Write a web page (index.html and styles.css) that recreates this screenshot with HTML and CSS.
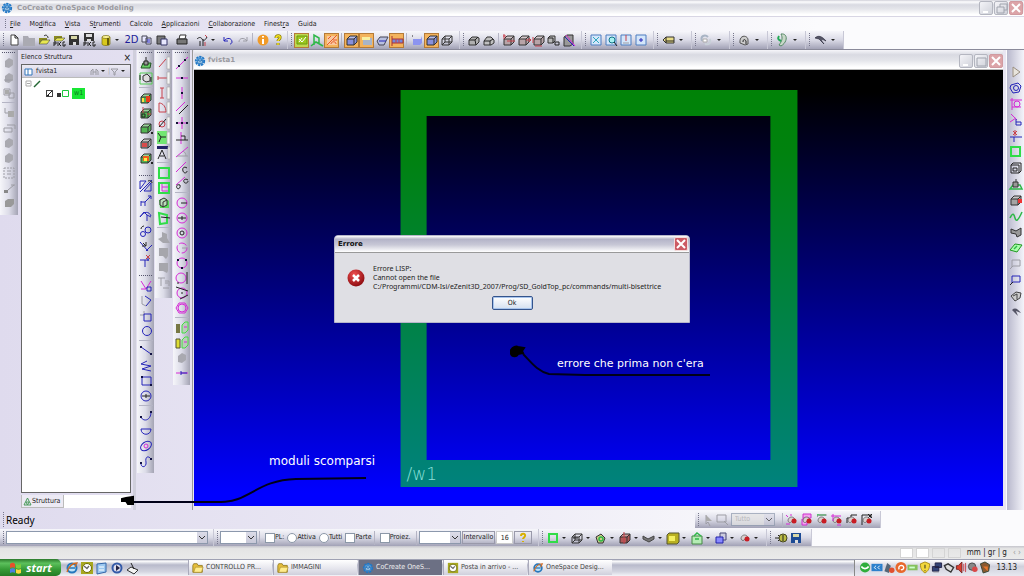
FILE: index.html
```html
<!DOCTYPE html>
<html lang="it">
<head>
<meta charset="utf-8">
<title>CoCreate OneSpace Modeling</title>
<link rel="stylesheet" href="styles.css">
</head>
<body>
<svg class="defs" aria-hidden="true">
  <symbol id="box" viewBox="0 0 14 14"><path d="M2 6h7v6H2z" fill="currentColor"/><path d="M2 6l3-3h7L9 6z" fill="currentColor"/><path d="M2 6l3-3h7L9 6z" fill="#fff" fill-opacity=".4"/><path d="M9 6l3-3v6l-3 3z" fill="currentColor"/><path d="M2 6h7v6H2zL5 3h7L9 6M12 3v6l-3 3" fill="none" stroke="#333"/></symbol>
  <symbol id="wire" viewBox="0 0 14 14"><path d="M2 6h7v6H2zL5 3h7L9 6M12 3v6l-3 3M5 3v6h7M5 9l-3 3" fill="none" stroke="currentColor"/></symbol>
  <symbol id="logo" viewBox="0 0 14 14"><circle cx="7" cy="7" r="4.500" fill="none" stroke="#2277c4" stroke-width="3" stroke-dasharray="2.500 .8"/><circle cx="7" cy="7" r="4" fill="#4a9ade"/><path d="M4.500 6l2.500-1.500L9.500 6v3L7 10.500 4.500 9zM4.500 6L7 7.500 9.500 6M7 7.500v3" fill="#bfe2fa" stroke="#185a9c" stroke-width=".7"/></symbol>
  <symbol id="blob" viewBox="0 0 14 14"><path d="M3 5l4-3 4 2v5l-4 3-4-1z" fill="#a9a9b0"/></symbol>
  <symbol id="disk" viewBox="0 0 14 14"><path d="M2 2h10v10H2z" fill="currentColor"/><path d="M4 3h6v3H4z" fill="#d8d8a8"/><path d="M6 9h3v3H6z" fill="#ddd"/></symbol>
  <symbol id="folder" viewBox="0 0 14 14"><path d="M1 4l1-2h4l1 2h5v8H1z" fill="#e6bf3c" stroke="#937a20"/><path d="M2 12l2-6h9l-2 6z" fill="#ffec8c" stroke="#a58a2c" stroke-width=".7"/></symbol>
  <symbol id="clock" viewBox="0 0 14 14"><path d="M1 1h12v12H1z" fill="#a8a820"/><circle cx="7" cy="7" r="4.500" fill="#fff" stroke="#6d6d00"/><path d="M4 5l3 2.500L9 5" fill="none" stroke="#666" stroke-width="1.300"/></symbol>
  <symbol id="ie" viewBox="0 0 14 14"><circle cx="7" cy="7" r="4.500" fill="#bfe3f8" stroke="#2577bd" stroke-width="2"/><path d="M4 7h6" stroke="#2577bd" stroke-width="1.500"/><path d="M2 11C4 5 8 2 12 2l-2 4" fill="none" stroke="#d06b24" stroke-width="1.300"/></symbol>
  <symbol id="dot2" viewBox="0 0 14 14"><path d="M3 8c0-4 4-5 6-3l2 3-2 2-2-2c-1 2-3 2-4 0z" fill="#d8d0d0" stroke="#555" stroke-width=".7"/><circle cx="9" cy="8" r="2.500" fill="#c81c24"/></symbol>
</svg>

<header class="titlebar">
  <svg class="ico"><use href="#logo"/></svg>
  <h1>CoCreate OneSpace Modeling</h1>
  <div class="winbtns">
    <button class="wb" aria-label="Riduci"><svg><path d="M3 10h5" class="w2"/></svg></button>
    <button class="wb" aria-label="Ripristina"><svg><path d="M5 5V2h7v6h-3M2 5h7v6H2z" class="w1"/></svg></button>
    <button class="wb close" aria-label="Chiudi"><svg><path d="M2 2l8 8M10 2l-8 8" class="wx"/></svg></button>
  </div>
</header>

<nav class="menu">
  <i class="grip"></i>
  <a href="#"><u>F</u>ile</a><a href="#">Mo<u>d</u>ifica</a><a href="#"><u>V</u>ista</a><a href="#">S<u>t</u>rumenti</a><a href="#">Calcolo</a><a href="#"><u>A</u>pplicazioni</a><a href="#"><u>C</u>ollaborazione</a><a href="#">Finest<u>r</u>a</a><a href="#">Guida</a>
</nav>

<div class="tools">
  <div class="bar">
    <i class="grip"></i>
    <button class="t" aria-label="Nuovo"><svg><path d="M4 2h4l3 3v7H4z" fill="#fff" stroke="#444"/><path d="M8 2v3h3" class="k"/></svg></button>
    <button class="t" aria-label="Cartella"><svg><path d="M1 3h5l1 2h6v8H1z" fill="#aaaab2"/></svg></button>
    <button class="t" aria-label="Apri"><svg><path d="M2 5h8v6H2z" fill="#8a8a20"/><path d="M2 11l3-4h8l-3 4z" fill="#e8e850" stroke="#444" stroke-width=".6"/><path d="M7 3c2-2 4 0 4 2" class="k"/></svg></button>
    <button class="t" aria-label="Apri pacchetto"><svg><path d="M2 3h8v5H2z" fill="#8a8a20"/><path d="M2 8l3-3h8l-3 3z" fill="#e8e850" stroke="#444" stroke-width=".6"/><path d="M2 13V9h2v2H2M6 9v4M9 9l-2 2 2 2M13 9h-2v4h2v-2" class="k"/></svg></button>
    <button class="t" aria-label="Salva"><svg class="c-dk"><use href="#disk"/></svg></button>
    <button class="t" aria-label="Salva pacchetto"><svg class="c-dk"><path d="M2 0h10v8H2z" fill="#333"/><path d="M4 1h6v3H4zM5 6h4v2H5z" fill="#ddd"/><path d="M2 13V9h2v2H2M6 9v4M9 9l-2 2 2 2M13 9h-2v4h2v-2" class="k"/></svg></button>
    <i class="gap2"></i>
    <button class="t" aria-label="Database"><svg><path d="M3 4v7c0 2 8 2 8 0V4z" fill="#d8c81c" stroke="#776c10" stroke-width=".7"/><ellipse cx="7" cy="4" rx="4" ry="1.500" fill="#fff79a" stroke="#776c10" stroke-width=".7"/><path d="M9 5v7" stroke="#665c08" stroke-width="2"/></svg></button><i class="dd"></i>
    <button class="t txt2d" aria-label="2D">2D</button>
    <button class="t" aria-label="Copia"><svg><path d="M2 3h5v6H2zM6 5h5v6H6z" fill="#e8e8ff" stroke="#445"/><path d="M7 7h3M7 9h3" class="b"/></svg></button>
    <button class="t" aria-label="Incolla"><svg><path d="M2 3h8v8H2z" fill="#777" stroke="#333"/><path d="M6 6h6v6H6z" fill="#e8e8ff" stroke="#336"/></svg></button>
    <i class="gap5"></i>
    <button class="t" aria-label="Stampa"><svg><path d="M4 6l1-4h6l-1 4z" fill="#fff" stroke="#333"/><path d="M2 6h10v5H2z" fill="#777" stroke="#222"/></svg></button>
    <i class="gap5"></i>
    <button class="t" aria-label="Strumenti"><svg><path d="M2 6c2-2 4-2 5 0s3 2 5-2M8 6v7M5 8v5" class="k"/><path d="M10 2l2 2M10 9v4" class="r"/></svg></button><i class="dd"></i>
    <i class="gap2"></i>
    <button class="t" aria-label="Annulla"><svg><path d="M3 4v4h4M3 8c3-4 8-3 8 1 0 1-1 2-2 2" class="b"/></svg></button>
    <button class="t" aria-label="Ripeti"><svg><path d="M11 4v4H7M11 8C8 4 3 5 3 9" class="s"/></svg></button>
    <i class="sep"></i>
    <button class="t" aria-label="Informazioni"><svg><circle cx="7" cy="7" r="5.500" fill="#f09a28"/><path d="M7 3v1.500M7 6v5" stroke="#fff" stroke-width="2"/></svg></button>
    <button class="t" aria-label="Aiuto"><svg><path d="M5 5c0-3 5-3 4 0 0 1-2 2-2 3M7 10v2" fill="none" stroke="#8a7a00" stroke-width="3"/><path d="M5 5c0-3 5-3 4 0 0 1-2 2-2 3M7 10v2" fill="none" stroke="#f4e424" stroke-width="1.500"/></svg></button>
    <i class="gap2"></i>
  </div>
  <div class="bar">
    <i class="grip"></i>
    <button class="t on lime" aria-label="Piano di lavoro"><svg><path d="M2 3h10v8H2z" fill="#9cc820" stroke="#6a9a10"/><path d="M4 6l3 3 4-5M4 9l3-4" stroke="#fff" fill="none"/></svg></button>
    <button class="t" aria-label="Assi"><svg><path d="M4 12V2l5 3v5M1 13l5-4 7 4M4 9l5 1" class="g"/></svg></button>
    <button class="t on" aria-label="Schizzo"><svg><path d="M2 3h10v9H2z" fill="#f8c8a0"/><path d="M2 12L12 2M3 6l3-3M6 11c0-3 5-3 5 0M8 7h4" stroke="#e85a28" fill="none"/></svg></button>
    <i class="sep"></i>
    <button class="t on" aria-label="Ombreggiato"><svg class="c-bl"><use href="#box"/></svg></button>
    <button class="t on" aria-label="Misto"><svg><path d="M3 5h9v7H3z" fill="#a8b4c8"/><path d="M2 4h8v3H2z" fill="#f8f0a0"/></svg></button>
    <button class="t" aria-label="Faccia"><svg class="c-bl"><path d="M2 8l3-4h8l-2 4-2 4H4z" fill="#b8c0e0" stroke="#445"/><path d="M4 8h7" class="b"/></svg></button>
    <button class="t on" aria-label="Sezione"><svg><path d="M2 3v10M2 6h11v4H2" fill="#7488d8" stroke="#a33"/><path d="M6 6v4M9 6v4" class="r"/></svg></button>
    <i class="sep"></i>
    <button class="t" aria-label="Solido"><svg><path d="M3 6l8 0 1-3v7l-2 2H3z" fill="#8c94f0"/><path d="M2 3h1" class="k"/></svg></button>
    <button class="t on" aria-label="Bordi"><svg class="c-bl"><use href="#box"/></svg></button>
    <button class="t" aria-label="Filo"><svg class="c-dk"><use href="#wire"/></svg></button>
    <i class="gap5"></i>
  </div>
  <div class="bar">
    <i class="grip"></i>
    <button class="t" aria-label="Raccordo"><svg><path d="M2 7l3-3h5l2 1v4l-3 3H2z" fill="#b0b0b0" stroke="#333"/><path d="M2 7h6l1 5M8 7l3-3" class="k"/></svg></button>
    <button class="t" aria-label="Smusso"><svg><path d="M2 8l3-4h4l3 3v3l-3 2H2z" fill="#c0c0c0" stroke="#333"/><path d="M2 8h6v4M8 8l3-2" class="k"/></svg></button>
    <i class="sep"></i>
    <button class="t" aria-label="Estrudi"><svg class="c-pk"><use href="#box"/><path d="M2 1v5M1 3h3M5 8h8" class="r"/></svg></button>
    <button class="t" aria-label="Tira"><svg class="c-pk"><use href="#box"/><path d="M9 7h4M12 5l2 2-2 2" class="r"/></svg></button>
    <button class="t" aria-label="Sposta"><svg class="c-pk"><use href="#box"/><path d="M1 4v6M3 13h7" class="r"/></svg></button>
    <button class="t" aria-label="Scala"><svg class="c-gy"><path d="M1 5l2-2h5v5l-2 2H1z" fill="#bbb" stroke="#333"/><path d="M1 5h5v5M8 9h4v3H8z" class="k"/></svg></button>
    <button class="t" aria-label="Taglia"><svg><path d="M2 4l3-2h6v9l-3 2H2z" fill="#999" stroke="#333"/><path d="M4 2l9 11" class="m"/><path d="M3 4l9 9" class="b"/></svg></button>
    <i class="gap5"></i>
  </div>
  <div class="bar">
    <i class="grip"></i>
    <button class="t" aria-label="Adatta"><svg><path d="M2 2h10v10H2z" class="zf"/><path d="M4 4l6 6M10 4l-6 6" stroke="#30a8c0"/></svg></button>
    <button class="t" aria-label="Zoom finestra"><svg><path d="M2 2h10v10H2z" class="zf"/><circle cx="8" cy="7" r="3" fill="#a8f0f0" stroke="#178"/><path d="M10 9l3 4" class="k"/></svg></button>
    <button class="t" aria-label="Zoom precedente"><svg><path d="M2 2h10v10H2z" class="zf"/><path d="M7 2v6" class="r"/><path d="M4 10h6" class="s"/></svg></button>
    <button class="t" aria-label="Centra"><svg><path d="M2 2h10v10H2z" class="zf"/><path d="M7 5v4M5 7h4" class="b"/></svg></button>
    <i class="gap5"></i>
  </div>
  <div class="bar"><i class="grip"></i><button class="t w" aria-label="Etichetta"><svg><path d="M2 7l3-3h8v6H5z" fill="#e8dc88" stroke="#333"/><path d="M5 4v6M5 8h8" class="k"/></svg></button><i class="dd"></i><i class="gap5"></i></div>
  <div class="bar"><i class="grip"></i><button class="t w" aria-label="Ruota"><svg><path d="M3 8c-2-5 3-7 6-4" fill="none" stroke="#a8b4c4" stroke-width="2"/><path d="M4 6h4v3H4z" fill="#fff" stroke="#aaa"/><path d="M11 6c1 5-2 6-5 5" fill="none" stroke="#c8d0d8" stroke-width="2"/></svg></button><i class="dd"></i><i class="gap5"></i></div>
  <div class="bar"><i class="grip"></i><button class="t w" aria-label="Blocca"><svg><path d="M3 10c-1-9 8-8 8-3v4l-3 1-5-2z" fill="#ccc" stroke="#555"/><path d="M6 9c0-3 2-3 3-1v3" class="k"/></svg></button><i class="dd"></i><i class="gap5"></i></div>
  <div class="bar"><i class="grip"></i><button class="t w" aria-label="Analisi"><svg><path d="M6 1c7-1 7 8 0 12l-2-1c3-4 4-7 2-11z" fill="#c8d8c8" stroke="#586"/><path d="M4 3c-2 3 0 4 2 5" fill="none" stroke="#2a5" stroke-width="2"/></svg></button><i class="dd"></i><i class="gap5"></i></div>
  <div class="bar"><i class="grip"></i><button class="t w" aria-label="Utensili"><svg><path d="M2 5c3-3 7-2 11 3-2-1-4-2-5-1l3 4-5-5z" fill="#556" stroke="#223" stroke-width=".6"/></svg></button><i class="dd"></i><i class="gap5"></i></div>
</div>

<main class="work">
  <div class="strip off">
    <i class="grip h"></i>
    <button class="t" aria-label="Parte"><svg><use href="#blob"/></svg></button>
    <button class="t" aria-label="Assieme"><svg><use href="#blob"/><path d="M2 9h9" class="s"/></svg></button>
    <button class="t" aria-label="Copia"><svg><path d="M2 3h6v6H2zM7 7h5v5H7z" class="s"/><path d="M3 4h4v4H3z" fill="#aaa"/></svg></button>
    <i class="sep h"></i>
    <button class="t" aria-label="Inserisci"><svg><path d="M3 2v5h3" class="s"/><path d="M6 5h6v6H6z" fill="#aaa"/></svg></button>
    <button class="t" aria-label="Rimuovi"><svg><path d="M2 7h8v4H2zM5 4h8v4" class="s"/></svg></button>
    <button class="t" aria-label="Condividi"><svg><use href="#blob"/></svg></button>
    <button class="t" aria-label="Carica"><svg><use href="#blob"/></svg></button>
    <button class="t" aria-label="Griglia"><svg><path d="M2 2h10v10H2z" class="s" stroke-dasharray="2 1"/><path d="M5 5h4M5 8h4" class="s"/></svg></button>
    <button class="t" aria-label="Collega"><svg><path d="M2 9h4v3H2z" fill="#888"/><path d="M6 9l6-5" class="s"/><path d="M9 4h4" class="s"/></svg></button>
    <button class="t" aria-label="Blocco"><svg><path d="M3 5l3-2h6v5l-3 3H3z" fill="#999"/></svg></button>
    <i class="gap5"></i>
  </div>

  <aside class="panel">
    <div class="ptitle"><h2>Elenco Struttura</h2><button class="px" aria-label="Chiudi pannello">×</button></div>
    <div class="tree">
      <div class="thead"><svg class="mini"><path d="M1 2h7v6H1zM4 2v6" fill="#fff" stroke="#37b"/></svg><span>fvista1</span><span class="filt"><svg class="mini"><path d="M1 8V4l2-2v6M6 8V2l2 2v4M3 5h3" class="s"/></svg><i class="dd"></i>|<svg class="mini"><path d="M1 2h7L5 5v3H4V5z" class="s"/></svg><i class="dd"></i></span></div>
      <div class="node"><svg class="mini"><path d="M2 2h5v5H2zM3 4.500h3" fill="none" stroke="#aaa"/></svg><svg class="mini"><path d="M1 8l6-6" stroke="#263" fill="none" stroke-width="1.500"/></svg></div>
      <div class="node kid"><input type="checkbox" checked id="w1"><svg class="pair"><path d="M1 5h4v4H1z" fill="#333"/><path d="M6.500 2.500h6v6h-6z" fill="#fff" stroke="#1bc83c"/></svg><label for="w1">w1</label></div>
    </div>
    <div class="tabs"><button class="tab"><svg class="mini"><path d="M4.500 1L8 8H1zM3 5h3l-1.500 3z" fill="none" stroke="#4a9a5c"/></svg>Struttura</button></div>
  </aside>

  <div class="strip s2">
    <i class="grip h"></i>
    <button class="t" aria-label="Estrusione"><svg><path d="M2 12l2-5h8l-1 5z" fill="#6c6" stroke="#252"/><path d="M5 5h4v4H5zM7 5V1" fill="#999" stroke="#222"/></svg></button>
    <button class="t" aria-label="Rotazione"><svg><path d="M1 2h12v11H1z" fill="none" stroke="#5c5"/><path d="M4 5l4-2 3 3v4l-4 1-3-2z" fill="#ddd" stroke="#333"/><path d="M1 4v5M12 6v5" class="k"/></svg></button>
    <i class="sep h"></i>
    <button class="t" aria-label="Unisci"><svg class="c-gr"><use href="#box"/><path d="M7 5h4v6H7z" fill="#e83c1c"/><path d="M3 7h2v4H3z" fill="#fd4"/></svg></button>
    <button class="t" aria-label="Sottrai"><svg class="c-gr"><use href="#box"/><path d="M4 1v6M8 8h4" class="r"/><path d="M3 8h3v3H3z" class="k"/></svg></button>
    <button class="t" aria-label="Intersezione"><svg class="c-gr"><use href="#box"/><path d="M12 11h2v2h-2z" fill="#222"/></svg></button>
    <button class="t" aria-label="Foro"><svg class="c-gy"><use href="#box"/><path d="M3 7h5v4H3z" fill="#d84c4c"/></svg></button>
    <button class="t" aria-label="Svuota"><svg class="c-gr"><use href="#box"/><path d="M4 5h6v5H4z" fill="#f05c1c"/><path d="M5 7h3v3H5z" fill="#fe4"/><path d="M12 11h2v2h-2z" fill="#222"/></svg></button>
    <i class="gap8"></i><i class="grip h"></i>
    <button class="t" aria-label="Specchio"><svg><path d="M1 2h6L1 10zM12 4v8H5zM1 13L13 1" class="b"/><path d="M9 2c2-1 4 0 4 2" class="k"/></svg></button>
    <button class="t" aria-label="Trasla"><svg><path d="M2 7v5M2 8h4v4M6 8l6-6M9 2h3v3" class="b"/></svg></button>
    <button class="t" aria-label="Ruota profilo"><svg><path d="M1 8l4-5 3 3 4 2M8 6v6M1 8c4-6 9-6 11-1" class="b"/></svg></button>
    <button class="t" aria-label="Copia cerchi"><svg><circle cx="4" cy="10" r="2.500" class="b"/><circle cx="9" cy="6" r="3" class="b"/><path d="M2 5c0-2 2-3 3-3" class="k"/></svg></button>
    <button class="t" aria-label="Equidistante"><svg><path d="M1 3l8 9M7 12l6-6" class="b"/><path d="M3 7h4V3M7 7L4 4" class="k"/></svg></button>
    <button class="t" aria-label="Taglia linea"><svg><path d="M1 6h9M6 6v7M9 3v4" class="b"/><path d="M7 1l4 4M11 1L7 5" class="r"/></svg></button>
    <i class="gap5"></i><i class="grip h"></i>
    <button class="t" aria-label="Raccorda"><svg><path d="M2 2l5 8 5-8M2 10h5" class="m"/><path d="M8 12V8h4v4z" class="b"/></svg></button>
    <button class="t" aria-label="Smussa"><svg><path d="M6 2l6 4-5 6" class="b"/><path d="M3 2v8l4 2" class="s"/></svg></button>
    <button class="t" aria-label="Angolo"><svg><path d="M1 6h4V2" class="s"/><path d="M5 5h7v7H5z" class="b"/></svg></button>
    <button class="t" aria-label="Tondo"><svg><circle cx="8" cy="7" r="4.500" class="b"/></svg></button>
    <i class="sep h"></i>
    <button class="t" aria-label="Linea"><svg><path d="M2 3l10 7" class="b"/><path d="M1 2h2v2H1zM11 9h2v2h-2z" fill="#114"/></svg></button>
    <button class="t" aria-label="Polilinea"><svg><path d="M8 2L2 5l10 2-9 3 9 2" class="b"/></svg></button>
    <button class="t" aria-label="Rettangolo"><svg><path d="M3 3h9v8H3z" class="b"/><path d="M2 2h2v2H2zM11 10h2v2h-2z" fill="#114"/></svg></button>
    <button class="t" aria-label="Cerchio"><svg><circle cx="7" cy="7" r="5" class="b"/><path d="M3 7h8M7 5v4" class="k"/></svg></button>
    <i class="sep h"></i>
    <button class="t" aria-label="Arco"><svg><path d="M2 8c2 5 10 4 10-5" class="b"/><path d="M1 7h2v2H1zM11 2h2v2h-2z" fill="#114"/></svg></button>
    <button class="t" aria-label="Semicerchio"><svg><path d="M2 5h10c0 7-10 7-10 0z" class="b"/></svg></button>
    <button class="t" aria-label="Ellisse"><svg><ellipse cx="7" cy="7" rx="6" ry="4" transform="rotate(-35 7 7)" class="b"/><circle cx="7" cy="7" r="2" class="m"/></svg></button>
    <button class="t" aria-label="Spline"><svg><path d="M2 9c0 6 6 4 5-1S9 1 12 5" class="b"/><path d="M1 8h2v2H1zM11 4h2v2h-2z" fill="#114"/></svg></button>
    <i class="gap5"></i>
  </div>

  <div class="strip s3">
    <i class="grip h"></i>
    <button class="t" aria-label="Quota linea"><svg><path d="M2 11l7-8" class="r"/><path d="M10 1h3v12h-3z" class="rl"/></svg></button>
    <button class="t" aria-label="Quota orizzontale"><svg><path d="M1 7h9M1 5v4" class="r"/><path d="M10 1h3v12h-3z" class="rl"/></svg></button>
    <button class="t" aria-label="Quota verticale"><svg><path d="M5 2v10M3 2h4M3 12h4" class="r"/><path d="M10 1h3v12h-3z" class="rl"/></svg></button>
    <button class="t" aria-label="Quota raggio"><svg><path d="M2 2v9h7c0-5-3-9-7-9z" class="r"/><path d="M10 1h3v12h-3z" class="rl"/></svg></button>
    <button class="t" aria-label="Quota diametro"><svg><circle cx="5" cy="8" r="3" class="r"/><path d="M2 11l7-8" class="k"/><path d="M10 1h3v12h-3z" class="rl"/></svg></button>
    <button class="t" aria-label="Quota attiva"><svg><path d="M0 0h10v13H0z" fill="#72e672"/><path d="M1 2l3 4 5 0M4 6l-2 5" class="k"/><path d="M10 1h3v12h-3z" class="rl"/></svg></button>
    <button class="t" aria-label="Testo"><svg><path d="M0 0h11v3H0z" fill="#226"/><path d="M1 13l4-9 4 9M3 10h4" class="k"/><path d="M11 1h2v12h-2z" class="rl"/></svg></button>
    <i class="sep h"></i>
    <button class="t" aria-label="Piano"><svg><path d="M2 2h10v10H2z" class="g2"/></svg></button>
    <button class="t" aria-label="Piano parallelo"><svg><path d="M2 2h10v10H2z" class="g2"/><path d="M5 3v7h6M5 6h6" class="m"/></svg></button>
    <button class="t" aria-label="Piano su faccia"><svg><path d="M2 4l6-2 4 3v7H3z" fill="#5d5"/><path d="M3 4l4-2 3 2v5l-4 2-3-2zM6 6v5M6 6l4-2" fill="#bdb" stroke="#333"/></svg></button>
    <button class="t" aria-label="Piano normale"><svg><path d="M2 2l8 2v8l-7 1z" class="g2"/><path d="M4 6l9 1" class="k"/></svg></button>
    <i class="sep h"></i>
    <button class="t" aria-label="Blocca"><svg><path d="M5 1l5 2v4l3 5H6l-5-4 4-2z" fill="#a6a6ac"/></svg></button>
    <button class="t" aria-label="Sblocca"><svg><path d="M2 2h9v8l-2 3-3-3H2z" fill="#a6a6ac"/></svg></button>
    <button class="t" aria-label="Proietta"><svg><path d="M2 2h9v8l-1 2-4-2H2z" fill="#a6a6ac"/></svg></button>
    <button class="t" aria-label="Testo 3D"><svg><path d="M1 2h7M4 2v8M8 5h4v5M8 7h3M6 12h6" class="s"/></svg></button>
    <i class="gap8"></i>
  </div>

  <div class="strip s4">
    <i class="grip h"></i>
    <button class="t" aria-label="Costruzione linea"><svg><path d="M1 13L13 1" class="m"/><path d="M3 9h2v2H3zM9 3h2v2H9z" fill="#113"/></svg></button>
    <button class="t" aria-label="Costruzione orizzontale"><svg><path d="M1 7h12" class="m"/><path d="M6 6h2v2H6z" fill="#113"/></svg></button>
    <button class="t" aria-label="Costruzione verticale"><svg><path d="M7 1v12" class="m"/><path d="M6 6h2v2H6z" fill="#113"/></svg></button>
    <button class="t" aria-label="Parallela"><svg><path d="M1 10L10 1" class="m"/><path d="M4 13l9-9" class="k"/></svg></button>
    <button class="t" aria-label="Asse"><svg><path d="M7 1v12M2 7h10" class="m"/><path d="M1 6h2v2H1zM11 6h2v2h-2zM6 6h2v2H6z" fill="#113"/></svg></button>
    <button class="t" aria-label="Perpendicolare"><svg><path d="M6 1v12" class="m"/><path d="M1 9h12M6 5h4v4" class="k"/></svg></button>
    <button class="t" aria-label="Bisettrice"><svg><path d="M1 11L13 1" class="m"/><path d="M2 10h11M8 5c2 1 3 3 3 5" class="s"/></svg></button>
    <button class="t" aria-label="Tangente"><svg><path d="M1 11L11 1" class="m"/><path d="M12 7c-3-2-5 0-4 3s4 2 4 0" class="k"/></svg></button>
    <button class="t" aria-label="Doppia tangente"><svg><path d="M1 9l9-8" class="m"/><path d="M13 4c-3-2-5 0-4 2s4 1 4-1M5 9c-3-1-4 1-3 3s4 0 3-3" class="k"/></svg></button>
    <i class="sep h"></i>
    <button class="t" aria-label="Cerchio centro"><svg><circle cx="7" cy="7" r="5" class="m"/><path d="M6 7h6" class="k"/></svg></button>
    <button class="t" aria-label="Cerchio diametro"><svg><circle cx="7" cy="7" r="5" class="m"/><path d="M7 5v4M3 7h8" class="k"/></svg></button>
    <button class="t" aria-label="Concentrico"><svg><circle cx="7" cy="7" r="5" class="m"/><circle cx="7" cy="7" r="2" class="k"/></svg></button>
    <button class="t" aria-label="Cerchio raggio"><svg><circle cx="7" cy="7" r="5" class="m" stroke-dasharray="8 2"/><path d="M7 7h5" class="s"/></svg></button>
    <button class="t" aria-label="Tre punti"><svg><circle cx="7" cy="7" r="5" class="m"/><path d="M2 3h2v2H2zM10 3h2v2h-2zM6 11h2v2H6z" fill="#113"/></svg></button>
    <button class="t" aria-label="Cerchio tangente"><svg><circle cx="6" cy="7" r="5" class="m"/><path d="M12 1v12M2 12h2" class="k"/></svg></button>
    <button class="t" aria-label="Tangente due"><svg><circle cx="7" cy="7" r="5" class="m"/><path d="M1 1l12 4M13 9L5 13M6 7h2" class="k"/></svg></button>
    <button class="t" aria-label="Poligono"><svg><path d="M4 2h6l3 5-3 5H4L1 7z" class="m"/><circle cx="7" cy="7" r="4" class="m"/></svg></button>
    <i class="sep h"></i>
    <button class="t" aria-label="Proietta bordo"><svg><path d="M1 3h4v9H1z" fill="#774"/><path d="M7 4l3-3h3v8l-3 3H7z" fill="#bcb" stroke="#4d4"/><path d="M9 6h3" class="m"/></svg></button>
    <button class="t" aria-label="Proietta faccia"><svg><path d="M1 3h4v9H1z" fill="#dd3" stroke="#553"/><path d="M7 4l3-3h3v8l-3 3H7z" fill="#bcb" stroke="#4d4"/><path d="M9 6h3" class="m"/></svg></button>
    <button class="t" aria-label="Elimina"><svg><use href="#blob"/></svg></button>
    <button class="t" aria-label="Punto"><svg><path d="M1 7h12" class="m"/><path d="M6 5v4M6 7h6" class="b"/></svg></button>
    <i class="gap5"></i>
  </div>

  <section class="view">
    <div class="vtitle">
      <svg class="ico"><use href="#logo"/></svg><h2>fvista1</h2>
      <div class="winbtns">
        <button class="wb" aria-label="Riduci vista"><svg><path d="M3 10h5" class="w2"/></svg></button>
        <button class="wb" aria-label="Ingrandisci vista"><svg><path d="M2 3h9v8H2z" class="w1"/></svg></button>
        <button class="wb close" aria-label="Chiudi vista"><svg><path d="M2 2l8 8M10 2l-8 8" class="wx"/></svg></button>
      </div>
    </div>
    <div class="canvas">
      <svg class="scene" viewBox="0 0 807 435">
        <defs><linearGradient id="gf" x1="0" y1="0" x2="0" y2="1"><stop offset="0" stop-color="#008207"/><stop offset=".15" stop-color="#00820e"/><stop offset="1" stop-color="#00827d"/></linearGradient></defs>
        <path d="M206 20h396v396H206zM232 46v343h343V46z" fill="url(#gf)" fill-rule="evenodd"/>
        <text x="212" y="409" class="wlabel">/w1</text>
      </svg>
      <div class="dialog" role="dialog" aria-labelledby="dt">
        <div class="dhead"><h3 id="dt">Errore</h3><button class="wb dclose" aria-label="Chiudi errore"><svg><path d="M2 2l8 8M10 2l-8 8" class="wx"/></svg></button></div>
        <div class="dbody">
          <svg class="err"><defs><radialGradient id="eg" cx=".4" cy=".3" r=".7"><stop offset="0" stop-color="#f05050"/><stop offset="1" stop-color="#8e0c10"/></radialGradient></defs><circle cx="9" cy="9" r="8.500" fill="url(#eg)"/><path d="M6 6l6 6M12 6l-6 6" stroke="#fff" stroke-width="2.500"/></svg>
          <p>Errore LISP:<br>Cannot open the file<br>C:/Programmi/CDM-Isi/eZenit3D_2007/Prog/SD_GoldTop_pc/commands/multi-bisettrice</p>
        </div>
        <button class="ok">Ok</button>
      </div>
    </div>
  </section>

  <div class="strip right">
    <button class="t" aria-label="Riproduci"><svg><path d="M4 2l7 5-7 5z" fill="#e8e4dc" stroke="#9a8f80"/></svg></button>
    <button class="t" aria-label="Profilo"><svg><path d="M2 4l7-2 3 3-2 6-6 1-3-5z" class="b"/><circle cx="7" cy="7" r="2.500" class="b"/></svg></button>
    <button class="t" aria-label="Costruzione"><svg><path d="M1 3h12M3 1v12M12 10H3" class="m"/><circle cx="8" cy="7" r="3" class="m"/></svg></button>
    <button class="t" aria-label="Raccorda"><svg><path d="M2 1l6 6M1 9l6-4" class="m"/><path d="M7 9h5v3H7V6" class="b"/></svg></button>
    <button class="t" aria-label="Taglia"><svg><path d="M1 8h12M5 8v5" class="b"/><path d="M4 2l4 4M8 2L4 6M6 1v6" class="r"/></svg></button>
    <button class="t" aria-label="Piano"><svg><path d="M2 2h9v9H2z" class="g2"/></svg></button>
    <button class="t" aria-label="Parte"><svg><path d="M2 4l2-2h8v8l-2 2H2zM2 4h8v8M4 7h4v3H4z" class="k"/></svg></button>
    <button class="t" aria-label="Estrusione"><svg><path d="M1 12l3-4h7l2 4z" class="g"/><path d="M4 5h5v5H4zM7 5V2" fill="#999" stroke="#333"/></svg></button>
    <button class="t" aria-label="Sposta faccia"><svg class="c-gy"><use href="#box"/><path d="M9 6h4v4H9z" fill="#e33"/></svg></button>
    <button class="t" aria-label="Curva"><svg><path d="M1 9c3-6 4-4 5 0s3 3 7-6" class="g"/></svg></button>
    <button class="t" aria-label="Superficie"><svg><path d="M2 4l5 2 5-3v7l-4 2-1-3-5-1z" fill="#999" stroke="#333"/></svg></button>
    <button class="t" aria-label="Lamiera"><svg><path d="M1 9l5-6 7 1-5 7z" fill="#afa" stroke="#292"/><path d="M5 8l3-3" class="g"/></svg></button>
    <button class="t" aria-label="Nota"><svg><path d="M3 10V3h8v6H4" class="s"/><path d="M1 12l3-3" class="s"/></svg></button>
    <button class="t" aria-label="Quota"><svg><path d="M3 10V3h8v6H4" class="b"/><path d="M1 12l3-3" class="k"/></svg></button>
    <button class="t" aria-label="Assieme"><svg><path d="M2 7l5-4 5 1-1 5-5 3zM4 7l4-2v5" fill="#ccc" stroke="#444"/></svg></button>
    <button class="t" aria-label="Utensili"><svg><path d="M3 5c3-3 6-1 9 3l-5-2 2 5-5-5z" fill="#556"/></svg></button>
  </div>

  <svg class="notes">
    <path d="M366 428l-70 1c-30 1-40 13-58 20-10 4-20 3-36 3H128" class="ink"/>
    <path d="M122 449l4-1 7-1v7h-5l-2-3h-4z" class="inkf"/>
    <path d="M710 325H585l-36-1c-12-3-18-12-26-20" class="ink"/>
    <path d="M511 300c2-3 5-4 7-3l6 1-2 3 1 2-5 1c-1 3-6 3-7 0z" class="inkf"/>
    <text x="557" y="317" class="ntext">errore che prima non c'era</text>
    <text x="269" y="415" class="ntext big">moduli scomparsi</text>
  </svg>
</main>

<div class="statusrow">
  <i class="grip"></i><span class="ready">Ready</span>
  <div class="bar sel">
    <i class="grip"></i>
    <button class="t" aria-label="Puntatore"><svg><path d="M5 2v9l2-2 2 4" class="s"/><path d="M5 2l6 6H5z" fill="#aaa"/></svg></button>
    <button class="t" aria-label="Riquadro"><svg><path d="M1 2h9v7H1zM8 8l4 4" class="s"/></svg></button>
    <select class="sl off" aria-label="Filtro" disabled><option>Tutto</option></select>
    <i class="gap5"></i><i class="sep"></i>
    <button class="t" aria-label="Seleziona punto"><svg><use href="#dot2"/><path d="M1 2l2 2M6 1v2M1 11h4" class="m"/></svg></button>
    <button class="t" aria-label="Seleziona faccia"><svg><path d="M3 1h8v4H3zM2 6h5v6H2z" fill="#f4a0f0" stroke="#c3c"/><use href="#dot2"/></svg></button>
    <button class="t" aria-label="Seleziona bordo"><svg><use href="#dot2"/><path d="M2 2h9" class="g"/><path d="M2 4l2-2h8" class="s"/></svg></button>
    <button class="t" aria-label="Seleziona curva"><svg><use href="#dot2"/><path d="M1 3h10M3 1v7M7 12h4" class="m"/></svg></button>
    <button class="t" aria-label="Seleziona parte"><svg><path d="M2 10V5h4V2h6" class="k"/><use href="#dot2"/></svg></button>
    <button class="t" aria-label="Seleziona tutto"><svg><path d="M2 12V2h9v3M8 1l4 4M12 1L8 5" class="k"/><use href="#dot2"/></svg></button>
    <i class="gap5"></i>
  </div>
</div>

<div class="tools cmd">
  <div class="bar"><i class="grip"></i><select class="sl long" aria-label="Comando"><option></option></select><i class="gap5"></i></div>
  <div class="bar">
    <i class="grip"></i>
    <select class="sl s37" aria-label="Valore"><option></option></select>
    <i class="sep"></i>
    <label><input type="checkbox">PL:</label>
    <label><input type="radio" name="m">Attiva</label>
    <label><input type="radio" name="m">Tutti</label>
    <label><input type="checkbox">Parte</label>
    <i class="sep"></i>
    <label class="pj"><input type="checkbox">Proiez.</label>
    <i class="sep"></i>
    <select class="sl s42" aria-label="Tipo"><option></option></select>
    <button class="txt">Intervallo</button><input class="num" type="text" value="16" aria-label="Passo"><button class="txt q" aria-label="Guida"><svg><path d="M5 5c0-3 5-3 4 0 0 1-2 2-2 3M7 10v1" fill="none" stroke="#d8b000" stroke-width="2"/></svg></button>
    <i class="gap5"></i>
  </div>
  <div class="bar wide">
    <i class="grip"></i>
    <button class="t" aria-label="Piano"><svg><path d="M3 3h8v8H3z" class="g2"/></svg></button><i class="dd"></i>
    <button class="t" aria-label="Parte"><svg class="c-dk"><use href="#wire"/><path d="M3 7h5" class="k"/></svg></button><i class="dd"></i>
    <button class="t" aria-label="Modifica"><svg><path d="M2 6l5-3 4 4-2 5H4z" fill="#cc8" stroke="#333"/><circle cx="7" cy="8" r="2" class="g"/></svg></button><i class="dd"></i>
    <button class="t" aria-label="Sezione"><svg class="c-rd"><use href="#box"/><path d="M6 1v12" class="r"/></svg></button><i class="dd"></i>
    <button class="t" aria-label="Superficie"><svg><path d="M1 5l5 3 6-3v3l-5 3-6-3z" fill="#777" stroke="#444"/></svg></button><i class="dd"></i>
    <button class="t" aria-label="Volume"><svg><path d="M1 4l2-2h10v9l-2 2H1z" fill="#b8b020" stroke="#553"/><path d="M3 5h6v5H3z" fill="#f4f060"/></svg></button><i class="dd"></i>
    <button class="t" aria-label="Pacchetto"><svg><path d="M2 5h10v8H2z" fill="#b4ecb4" stroke="#484"/><path d="M4 5l3-3 4 3M5 8h4" class="g"/></svg></button><i class="dd"></i>
    <button class="t" aria-label="Livelli"><svg><path d="M6 2h6v7H6z" fill="#ccd" stroke="#447"/><path d="M2 6h7v6H2z" fill="#88f" stroke="#22a"/></svg></button><i class="dd"></i>
    <button class="t" aria-label="Punto"><svg><use href="#dot2"/></svg></button><i class="dd"></i>
    <i class="gap5"></i>
  </div>
  <div class="bar">
    <i class="grip"></i>
    <button class="t" aria-label="Esci"><svg><path d="M1 7h5M4 4l3 3-3 3" class="k"/><circle cx="9" cy="7" r="4" fill="#bb4" stroke="#442"/><path d="M9 4v6" class="k"/></svg></button>
    <button class="t" aria-label="Salva"><svg class="c-nv"><use href="#disk"/></svg></button>
    <i class="gap8"></i>
  </div>
</div>

<footer class="info"><i class="cell on"></i><i class="cell on"></i><i class="cell"></i><i class="cell"></i><span>mm | gr | g</span><span class="arr">‹ ›</span></footer>

<div class="taskbar">
  <button class="start"><svg><path d="M1 3c2-2 4-1 5 0v4C5 6 3 6 1 7z" fill="#e8502c"/><path d="M7 3c2 1 3 1 5 0v4c-2 1-3 1-5 0z" fill="#7ccc3c"/><path d="M1 8c2-1 4-1 5 0v4c-1-1-3-1-5 0z" fill="#4a80e0"/><path d="M7 8c2 1 3 1 5 0v4c-2 1-3 1-5 0z" fill="#f8d83c"/></svg>start</button>
  <div class="quick">
    <button class="t" aria-label="Internet Explorer"><svg><use href="#ie"/></svg></button>
    <button class="t" aria-label="Posta"><svg><use href="#clock"/></svg></button>
    <button class="t" aria-label="Desktop"><svg><path d="M2 3l9-1v9l-9 2z" fill="#9cc8f0" stroke="#36a"/><path d="M4 6h5M4 9h5" stroke="#fff"/></svg></button>
    <button class="t" aria-label="Lettore"><svg><circle cx="7" cy="7" r="4.500" fill="#dde" stroke="#345aa8" stroke-width="2"/><path d="M6 4l4 3-4 3z" fill="#224"/></svg></button>
    <button class="t" aria-label="Penna"><svg><path d="M2 9l4-3 7 3-4 4z" fill="#f4f4f4" stroke="#333"/><path d="M6 2l3 6" class="k"/></svg></button>
  </div>
  <div class="tasks">
    <button class="task"><svg viewBox="0 0 14 14"><use href="#folder" width="14" height="14"/></svg><span>CONTROLLO PR...</span></button>
    <button class="task"><svg viewBox="0 0 14 14"><use href="#folder" width="14" height="14"/></svg><span>IMMAGINI</span></button>
    <button class="task act"><svg viewBox="0 0 14 14"><use href="#logo" width="14" height="14"/></svg><span>CoCreate OneS...</span></button>
    <button class="task"><svg viewBox="0 0 14 14"><use href="#clock" width="14" height="14"/></svg><span>Posta in arrivo - ...</span></button>
    <button class="task"><svg viewBox="0 0 14 14"><use href="#ie" width="14" height="14"/></svg><span>OneSpace Desig...</span></button>
  </div>
  <div class="tray">
    <svg viewBox="1 1 12 12"><circle cx="7" cy="7" r="5.500" fill="#2fae3c"/><path d="M3 6c2 3 6 3 8 0" fill="none" stroke="#fff" stroke-width="2"/></svg>
    <svg viewBox="1 1 12 12"><path d="M1 3h12v8H1z" fill="#2c80cc"/><path d="M6 5L4 7l2 2M10 5L8 7l2 2" stroke="#fff" fill="none"/></svg>
    <svg viewBox="1 1 12 12"><path d="M5 2l4 3-2 8-5-2z" fill="#567"/><circle cx="10" cy="10" r="3" fill="#e05030"/></svg>
    <svg viewBox="1 1 12 12"><circle cx="7" cy="7" r="6" fill="#e8682c"/><path d="M5 9c-2-4 4-6 5-2 0 2-2 3-3 2" fill="none" stroke="#fff" stroke-width="1.500"/></svg>
    <svg viewBox="1 1 12 12"><path d="M1 4h11v6H1z" fill="#86c05c"/><path d="M3 6h6v2H3z" fill="#cfc"/></svg>
    <svg viewBox="1 1 12 12"><path d="M7 1l5 2c0 6-2 8-5 10-3-2-5-4-5-10z" fill="#f4d83c" stroke="#a88a10"/><path d="M7 4v4M7 10v1" class="k"/></svg>
    <svg viewBox="1 1 12 12"><path d="M5 2h7v5H5zM2 6h7v5H2z" fill="#347" stroke="#224"/><path d="M3 12h6" class="s"/></svg>
    <svg viewBox="1 1 12 12"><path d="M2 5l4-2 6 4-3 5-5-3z" fill="#ddd" stroke="#333" stroke-width="1.500"/></svg>
    <svg viewBox="1 1 12 12"><path d="M2 5h2l4-4v12L4 9H2z" fill="#d84030" stroke="#722"/><path d="M10 3v8M12 2v10" class="r"/></svg>
    <svg viewBox="1 1 12 12"><circle cx="6" cy="6" r="4" fill="#888" stroke="#444"/><circle cx="9" cy="9" r="3" fill="#d84848"/></svg>
    <svg viewBox="1 1 12 12"><path d="M2 3l5-2 5 3-1 7-6 2z" fill="#8a5a30" stroke="#343"/><path d="M5 6h5v5z" fill="#e8782c"/></svg>
    <time>13.13</time>
  </div>
</div>
</body>
</html>
```
FILE: styles.css
```css
* { box-sizing: border-box; }
html, body { margin: 0; }
body {
  min-height: 100vh;
  display: flex;
  flex-direction: column;
  background: linear-gradient(90deg, #dfdbee, #eeecf6 50%, #fbfbfd 80%);
  font: 7px/9px "DejaVu Sans Condensed", "DejaVu Sans", sans-serif;
  color: #222;
  overflow: hidden;
}
h1, h2, h3, p { margin: 0; font-size: inherit; font-weight: normal; }
button, select, input { font: inherit; color: inherit; margin: 0; padding: 0; }
button { border: 0; background: none; display: flex; align-items: center; justify-content: center; flex: none; }
svg { width: 14px; height: 14px; flex: none; display: block; overflow: visible; }
.defs { position: absolute; width: 0; height: 0; }

.k { fill: none; stroke: #222; }
.b { fill: none; stroke: #2424b8; }
.m { fill: none; stroke: #d62ad6; }
.r { fill: none; stroke: #c8404a; }
.g { fill: none; stroke: #2eb848; stroke-width: 1.5; }
.g2 { fill: none; stroke: #30dc48; stroke-width: 2; }
.s { fill: none; stroke: #9c9ca4; }
.rl { fill: #f4f4f4; stroke: #aaa; stroke-width: .7; }
.zf { fill: #d4e6fa; stroke: #4c7cc0; }
.c-dk { color: #333; }
.c-bl { color: #8890dc; }
.c-gy { color: #a4a4a4; }
.c-pk { color: #b8a4a8; }
.c-gr { color: #52b452; }
.c-rd { color: #b05858; }
.c-nv { color: #1c4a94; }

/* window chrome */
.titlebar { display: flex; align-items: center; height: 17px; padding: 0 1px; background: linear-gradient(#cfcfd8, #fdfdfe 12%, #d9dae2 30%, #e4e5ea 55%, #fff 90%); border-bottom: 1px solid #d8d6e4; }
.titlebar .ico, .vtitle .ico { width: 12px; height: 12px; }
.titlebar h1, .vtitle h2 { margin-left: 4px; font-family: "DejaVu Sans", sans-serif; font-weight: bold; color: #9a9aa0; }
.winbtns { margin-left: auto; display: flex; gap: 1px; }
.wb { width: 14px; height: 14px; border: 1px solid #b4b6c0; border-radius: 2px; background: linear-gradient(135deg, #f4f4f8, #d0d2da); }
.wb svg { width: 12px; height: 12px; }
.close { background: #dca4a8; border-color: #d09aa0; }
.w1 { fill: none; stroke: #a0a4ae; }
.w2 { stroke: #fff; stroke-width: 2; }
.wx { stroke: #fff; stroke-width: 2; }

.menu { display: flex; align-items: center; height: 14px; padding-left: 2px; }
.menu a { color: inherit; text-decoration: none; margin-right: 9px; }
.grip { flex: none; width: 6px; align-self: stretch; margin: 2px 0; background: repeating-linear-gradient(#77778c 0 1px, transparent 1px 2px) 3px 0 / 1px 100% no-repeat; }
.menu .grip { width: 8px; }
.grip.h { width: auto; height: 5px; margin: 0 2px; background: repeating-linear-gradient(90deg, #55556c 0 1px, transparent 1px 2px) 0 2px / 100% 1px no-repeat; }

.tools { display: flex; height: 18px; }
.bar { display: flex; align-items: center; background: linear-gradient(#f7f7fb, #dadae6 50%, #a2a2b6); border-right: 1px solid #c8c8d6; }
.t { width: 15px; height: 15px; }
.t.on { background: #f3b35c; border: 1px solid #b57b38; }
.t.lime { background: #c0d850; }
.txt2d { font: 10px/14px "DejaVu Sans", sans-serif; color: #1c1c98; margin-left: 2px; }
.dd { flex: none; display: inline-block; width: 0; height: 0; margin: 0 3px 0 2px; border: 2px solid transparent; border-top-color: #222; border-bottom: 0; }
.t.w + .dd { margin-left: 4px; }
.sep { flex: none; width: 1px; height: 14px; margin: 0 2px; background: #b4b4c4; }
.sep.h { width: 14px; height: 1px; margin: 2px auto; }
.gap2 { flex: none; width: 2px; height: 2px; }
.gap5 { flex: none; width: 5px; height: 5px; }
.gap8 { flex: none; width: 8px; height: 8px; }

/* work area */
.work { position: relative; flex: 1; display: flex; align-items: flex-start; gap: 1px; border-top: 1px solid #8a8a9a; }
.strip { flex: none; width: 17px; display: flex; flex-direction: column; align-items: center; background: linear-gradient(90deg, #f6f6fa, #dcdce8 50%, #a4a4b4); }
.strip .grip { align-self: stretch; }
.strip.off { width: 18px; }
.right { align-self: stretch; gap: 1px; padding-top: 14px; background: linear-gradient(90deg, #b8b8cc, #f4f4fa); }

.panel { align-self: stretch; flex: none; width: 117px; padding: 0 2px 2px; display: flex; flex-direction: column; border-right: 3px solid #d0cfdc; }
.ptitle { display: flex; justify-content: space-between; align-items: center; height: 14px; }
.px { font-size: 10px; }
.tree { flex: 1; background: #fff; border: 1px solid #666; }
.thead { display: flex; align-items: center; gap: 3px; height: 13px; padding: 0 2px; background: linear-gradient(#eceaf4, #cfcddf); border-bottom: 1px solid #bbb; }
.filt { margin-left: auto; color: #aaa; display: flex; align-items: center; }
.mini { width: 9px; height: 9px; }
.node { display: flex; align-items: center; height: 10px; padding-left: 2px; }
.kid { padding-left: 24px; gap: 3px; }
.kid label { background: #18e634; color: #0a7a1c; padding: 1px 2px; }
.pair { width: 13px; height: 10px; }
.tabs { display: flex; height: 13px; margin-top: 2px; background: #fff; }
.tab { background: #eceaf4; border: 1px solid #bbb; border-top: 0; padding: 0 3px 0 1px; }

input[type="checkbox"], input[type="radio"] { appearance: none; width: 10px; height: 10px; border: 1px solid #8c98a8; background: #fff; flex: none; }
input[type="radio"] { border-radius: 50%; }
.kid input[type="checkbox"] { width: 7px; height: 7px; border-color: #444; background: linear-gradient(135deg, #fff 45%, #222 45% 60%, #fff 60%); }

.view { flex: 1; align-self: stretch; margin-left: 1px; display: flex; flex-direction: column; padding: 0 3px 4px 1px; border-left: 1px solid #999; background: #e9e6f2; }
.vtitle { display: flex; align-items: center; height: 20px; padding: 2px 0 0; background: linear-gradient(#f6f6fa, #d9dae2 25%, #e4e5ea 55%, #fff 90%); border-bottom: 1px solid #bbb; }
.vtitle h2 { margin-left: 2px; }
.canvas { position: relative; flex: 1; background: linear-gradient(#000 5%, #00f 97%); }
.scene { width: 100%; height: 100%; position: absolute; inset: 0; }
.wlabel { font: 200 17px "DejaVu Sans", sans-serif; fill: #8ce0d8; }

.dialog { position: absolute; left: 140px; top: 165px; width: 356px; padding: 0 2px 12px; background: #dfdfe4; border: 1px solid #b6b6ca; border-radius: 4px 4px 0 0; }
.dhead { display: flex; align-items: center; justify-content: space-between; height: 17px; margin: 0 -2px; padding: 0 1px 0 3px; background: linear-gradient(#fff, #b4b4c8 20%, #c8c8d6 55%, #fff); border-bottom: 1px solid #999; border-radius: 3px 3px 0 0; }
.dhead h3 { font-family: "DejaVu Sans", sans-serif; font-weight: bold; color: #111; }
.dclose { background: #cc5a64; border-color: #f4dcdc; }
.dbody { display: flex; align-items: center; gap: 8px; padding: 11px 0 0 10px; }
.dbody p { white-space: nowrap; font: 7px/9px "Noto Sans", sans-serif; }
.err { width: 18px; height: 18px; }
.ok { width: 41px; height: 14px; margin: 5px auto 0; border: 1px solid #34548c; border-radius: 2px; background: linear-gradient(#fff, #d4e0f0); box-shadow: inset 0 0 0 1px #a8c4ec; }

.notes { position: absolute; inset: 0; width: 100%; height: 100%; pointer-events: none; }
.ink { fill: none; stroke: #000018; stroke-width: 2; }
.inkf { fill: #000; stroke: #000; stroke-width: 2; }
.ntext { font: 11px "DejaVu Sans", sans-serif; fill: #fff; }
.ntext.big { font-size: 12px; }

/* bottom rows */
.statusrow { display: flex; align-items: center; height: 19px; }
.ready { flex: 1; font: 10px/12px "Noto Sans", sans-serif; color: #000; }
.sel { height: 17px; margin-right: 14%; }
.cmd { height: 17px; }
.sl { appearance: none; height: 13px; border: 1px solid #8c98ac; border-radius: 0; padding-left: 3px; background-color: #fff; background-repeat: no-repeat; background-image: linear-gradient(-45deg, transparent 40%, #333 40% 60%, transparent 60%), linear-gradient(45deg, transparent 40%, #333 40% 60%, transparent 60%), linear-gradient(#dcdce8, #c8c8d8); background-size: 3px 3px, 3px 3px, 10px 100%; background-position: right 2px center, right 5px center, right; }
.sl.off { width: 44px; background-color: #e4e4e4; color: #aaa; opacity: .7; }
.long { width: 202px; }
.s37 { width: 37px; }
.s42 { width: 42px; }
.cmd label { display: flex; align-items: center; margin-left: 3px; flex: none; }
.cmd .pj { margin-right: 3px; }
.txt { height: 13px; border: 1px solid #99a; padding: 0 1px; margin: 0 1px; }
.num { width: 17px; height: 13px; border: 1px solid #ccc; text-align: center; }
.q { width: 18px; }

.info { display: flex; align-items: center; justify-content: flex-end; gap: 3px; height: 13px; padding-right: 3px; background: linear-gradient(#c4c4cc, #e4e4e4 20%, #eaeaea); font-size: 8px; }
.cell { width: 13px; height: 10px; border: 1px solid #d4d4d4; }
.cell.on { background: #fff; }
.info span { margin-left: 3px; }
.info .arr { color: #999; }

.taskbar { display: flex; align-items: center; height: 17px; background: linear-gradient(#80839a, #fff 12%, #b8bacb 35%, #d4d5e0 75%, #f4f4f8); }
.start { width: 61px; height: 17px; gap: 3px; border-radius: 0 5px 5px 0; background: linear-gradient(#2c7a2c, #5cc05c 25%, #379c37 60%, #257c25); color: #fff; font: italic bold 11px/14px "Open Sans", sans-serif; }
.quick { display: flex; padding-left: 3px; flex: none; width: 127px; }
.tasks { display: flex; flex: 1; gap: 1px; }
.task { width: 84px; height: 15px; justify-content: flex-start; gap: 2px; padding-left: 3px; background: linear-gradient(#fff, #e4e4ec 60%, #d0d0dc); border-left: 1px solid #aab; color: #444; }
.task.act { background: #6c7084; color: #eee; }
.task svg { width: 12px; height: 12px; }
.tray { display: flex; align-items: center; height: 16px; padding: 0 7px 0 4px; border-left: 1px solid #888; background: linear-gradient(#fff, #cfd0dc 40%, #e8e8f0); }
.tray svg { width: 12px; height: 11px; }
.tray time { margin-left: 5px; font-size: 8px; }
```
